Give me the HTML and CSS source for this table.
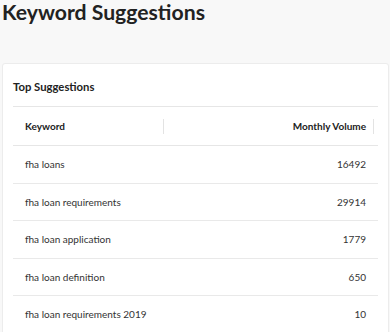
FILE: index.html
```html
<!DOCTYPE html>
<html>
<head>
<meta charset="utf-8">
<link rel="stylesheet" href="styles.css">
</head>
<body>
<h1 class="page-title">Keyword Suggestions</h1>
<section class="card">
  <h2 class="card-title">Top Suggestions</h2>
  <table class="kw-table">
    <thead>
      <tr>
        <th class="col-kw"><span class="th-label">Keyword</span></th>
        <th class="col-vol"><span class="th-label">Monthly Volume</span></th>
      </tr>
    </thead>
    <tbody>
      <tr><td>fha loans</td><td class="num">16492</td></tr>
      <tr><td>fha loan requirements</td><td class="num">29914</td></tr>
      <tr><td>fha loan application</td><td class="num">1779</td></tr>
      <tr><td>fha loan definition</td><td class="num">650</td></tr>
      <tr><td>fha loan requirements 2019</td><td class="num">10</td></tr>
    </tbody>
  </table>
</section>
</body>
</html>
```

FILE: styles.css
```css
html, body {
  margin: 0;
  padding: 0;
  background: #f8f8f8;
  font-family: Lato, "Liberation Sans", sans-serif;
  color: #333;
}
.page-title {
  margin: 0 0 0 2px;
  font-size: 21.2px;
  font-weight: 700;
  line-height: 24px;
  color: #222;
}
.card {
  margin: 39px 1px 0 2px;
  background: #fff;
  border: 1px solid #ececec;
  border-radius: 3px;
  padding: 0 10px;
}
.card-title {
  margin: 0;
  padding: 15px 0 11px 0;
  font-size: 11.3px;
  font-weight: 700;
  line-height: 16px;
  color: #222;
}
.kw-table {
  width: 100%;
  table-layout: fixed;
  border-collapse: collapse;
  font-size: 10px;
  line-height: 14px;
}
.kw-table th {
  position: relative;
  padding: 12px 12px;
  font-weight: 700;
  color: #222;
  border-top: 1px solid #e6e6e6;
  border-bottom: 1px solid #e6e6e6;
}
.kw-table th::after {
  content: "";
  position: absolute;
  right: 4px;
  top: 50%;
  width: 1px;
  height: 15px;
  margin-top: -7px;
  background: #e3e3e3;
}
.col-kw {
  width: 131px;
  text-align: left;
}
.col-vol {
  text-align: right;
}
.kw-table td {
  padding: 11.25px 12px;
  border-bottom: 1px solid #e9e9e9;
  color: #333;
}
.kw-table td.num {
  text-align: right;
}
```
